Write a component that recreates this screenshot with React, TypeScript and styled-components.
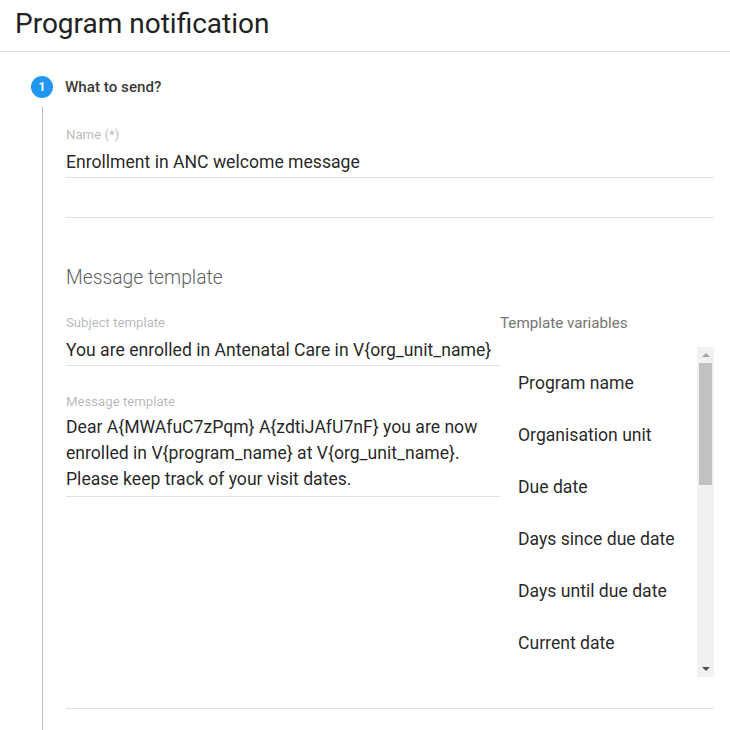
import React from 'react'
import styled, { createGlobalStyle } from 'styled-components';

const GlobalStyle = createGlobalStyle`
  html, body {
    margin: 0;
    padding: 0;
    background: #ffffff;
    font-family: Roboto, "Noto Sans", sans-serif;
    color: rgba(0, 0, 0, 0.87);
  }
`;

const Page = styled.div`
  width: 730px;
  height: 730px;
  overflow: hidden;
`;

const Header = styled.header`
  height: 51px;
  display: flex;
  align-items: center;
  padding: 0 15px;
  border-bottom: 1px solid #dcdcdc;
`;

const Title = styled.h1`
  margin: 0;
  font-size: 28px;
  font-weight: 400;
  line-height: 36px;
  color: #212121;
  margin-top: -4px;
`;

const Stepper = styled.div`
  padding: 23px 16px 0 31px;
`;

const StepHeader = styled.div`
  display: flex;
  align-items: center;
  height: 24px;
`;

const StepIcon = styled.span`
  width: 22px;
  height: 22px;
  border-radius: 50%;
  background: #2196f3;
  color: #ffffff;
  font-size: 12px;
  font-weight: 700;
  display: flex;
  align-items: center;
  justify-content: center;
`;

const StepLabel = styled.span`
  margin-left: 12px;
  font-size: 15.2px;
  font-weight: 500;
  color: rgba(0, 0, 0, 0.8);
`;

const StepContent = styled.div`
  margin-top: 8px;
  margin-left: 11px;
  border-left: 1px solid #bdbdbd;
  padding: 20px 0 40px 23px;
`;

const Field = styled.div`
  border-bottom: 1px solid #e0e0e0;
`;

const FieldLabel = styled.div`
  font-size: 13.2px;
  line-height: 16px;
  color: rgba(0, 0, 0, 0.3);
`;

const FieldValue = styled.div<{ $multi?: boolean }>`
  margin-top: ${p => (p.$multi ? 4 : 7)}px;
  padding-bottom: ${p => (p.$multi ? 4 : 3)}px;
  font-size: 17.6px;
  line-height: ${p => (p.$multi ? 26 : 24)}px;
  color: rgba(0, 0, 0, 0.87);
`;

const EmptyField = styled.div`
  height: 39px;
  border-bottom: 1px solid #e0e0e0;
`;

const SectionTitle = styled.h2`
  margin: 48px 0 0;
  font-size: 19.3px;
  font-weight: 300;
  line-height: 24px;
  color: #616161;
`;

const Columns = styled.div`
  display: flex;
  margin-top: 25px;
`;

const LeftColumn = styled.div`
  width: 434px;
  display: flex;
  flex-direction: column;
  gap: 28px;
`;

const RightColumn = styled.div`
  width: 214px;
`;

const VariablesLabel = styled.div`
  font-size: 15.2px;
  line-height: 16px;
  color: #757575;
`;

const ListBox = styled.div`
  margin-top: 16px;
  height: 330px;
  display: flex;
`;

const List = styled.ul`
  flex: 1;
  margin: 0;
  padding: 10px 0 0;
  list-style: none;
  overflow: hidden;
`;

const ListItem = styled.li`
  height: 52px;
  line-height: 52px;
  padding-left: 18px;
  font-size: 17.6px;
  color: rgba(0, 0, 0, 0.87);
  white-space: nowrap;
`;

const ScrollTrack = styled.div`
  width: 17px;
  background: #f1f1f1;
  display: flex;
  flex-direction: column;
`;

const ScrollArrow = styled.div<{ $down?: boolean; $dim?: boolean }>`
  height: 16px;
  display: flex;
  align-items: center;
  justify-content: center;

  &::after {
    content: '';
    width: 0;
    height: 0;
    border-left: 4px solid transparent;
    border-right: 4px solid transparent;
    ${p =>
      p.$down
        ? `border-top: 4px solid ${p.$dim ? '#a3a3a3' : '#505050'};`
        : `border-bottom: 4px solid ${p.$dim ? '#a3a3a3' : '#505050'};`}
  }
`;

const ScrollThumb = styled.div`
  height: 122px;
  margin: 0 2px;
  background: #c1c1c1;
`;

const ScrollSpacer = styled.div`
  flex: 1;
`;

const BottomLine = styled.div`
  margin-top: 31px;
  border-bottom: 1px solid #e0e0e0;
`;

const variables = [
  'Program name',
  'Organisation unit',
  'Due date',
  'Days since due date',
  'Days until due date',
  'Current date',
];

const subject = 'You are enrolled in Antenatal Care in V{org_unit_name}';
const message =
  'Dear A{MWAfuC7zPqm} A{zdtiJAfU7nF} you are now enrolled in V{program_name} at V{org_unit_name}. Please keep track of your visit dates.';

const App: React.FC = () => {
  return (
    <Page>
      <GlobalStyle />
      <Header>
        <Title>Program notification</Title>
      </Header>
      <Stepper>
        <StepHeader>
          <StepIcon>1</StepIcon>
          <StepLabel>What to send?</StepLabel>
        </StepHeader>
        <StepContent>
          <Field>
            <FieldLabel>Name (*)</FieldLabel>
            <FieldValue>Enrollment in ANC welcome message</FieldValue>
          </Field>
          <EmptyField />

          <SectionTitle>Message template</SectionTitle>
          <Columns>
            <LeftColumn>
              <Field>
                <FieldLabel>Subject template</FieldLabel>
                <FieldValue>{subject}</FieldValue>
              </Field>
              <Field>
                <FieldLabel>Message template</FieldLabel>
                <FieldValue $multi>{message}</FieldValue>
              </Field>
            </LeftColumn>
            <RightColumn>
              <VariablesLabel>Template variables</VariablesLabel>
              <ListBox>
                <List>
                  {variables.map(v => (
                    <ListItem key={v}>{v}</ListItem>
                  ))}
                </List>
                <ScrollTrack>
                  <ScrollArrow $dim />
                  <ScrollThumb />
                  <ScrollSpacer />
                  <ScrollArrow $down />
                </ScrollTrack>
              </ListBox>
            </RightColumn>
          </Columns>
          <BottomLine />
        </StepContent>
      </Stepper>
    </Page>
  )
}

export default App;
